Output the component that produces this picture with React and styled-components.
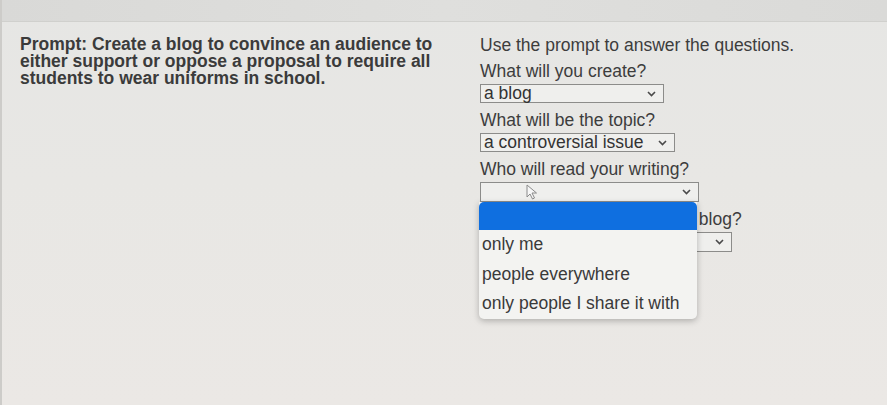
import React from 'react';
import styled, { createGlobalStyle } from 'styled-components';

const GlobalStyle = createGlobalStyle`
    html, body {
        margin: 0;
        padding: 0;
    }
    body {
        font-family: "Liberation Sans", Arial, sans-serif;
        background: #e7e6e3;
    }
`

const Page = styled.div`
    width: 887px;
    height: 405px;
    overflow: hidden;
    background: linear-gradient(180deg, #e6e6e4 0%, #e8e7e4 45%, #ebe8e5 100%);
    border-left: 2px solid #cdccc9;
    box-sizing: border-box;
`

const TopBar = styled.div`
    height: 21px;
    background: linear-gradient(90deg, #d9d9d7 0%, #dfdfdd 50%, #dadad8 100%);
    border-bottom: 1px solid #d0d0cd;
`

const Content = styled.div`
    display: grid;
    grid-template-columns: 460px 1fr;
    padding: 14px 0 0 18px;
`

const PromptText = styled.p`
    margin: 0;
    font-size: 17.5px;
    line-height: 17px;
    font-weight: 700;
    color: #3b3b3b;
    width: 445px;
`

const Questions = styled.div`
    display: flex;
    flex-direction: column;
    align-items: flex-start;
    color: #3d3d3d;
    font-size: 17.5px;
`

const Instruction = styled.div`
    line-height: 18px;
`

const Label = styled.div`
    line-height: 18px;
    margin-top: 8px;
    white-space: nowrap;
`

const SelectWrap = styled.div`
    position: relative;
    margin-top: 4px;
    z-index: ${p => (p.$open ? 2 : 1)};
`

const SelectBox = styled.div`
    display: flex;
    align-items: center;
    justify-content: space-between;
    box-sizing: border-box;
    width: ${p => p.$width}px;
    height: ${p => p.$height || 19}px;
    padding: 0 7px 0 3px;
    background: #efefed;
    border: 1px solid #8c8c8a;
    line-height: 17px;
    color: #333;
`

const Listbox = styled.div`
    position: absolute;
    top: 100%;
    left: -1px;
    width: 218px;
    background: #f3f3f1;
    border-radius: 0 0 5px 5px;
    box-shadow: 0 2px 6px rgba(0, 0, 0, 0.25);
    overflow: hidden;
`

const Highlight = styled.div`
    height: 28px;
    background: #0f6fe0;
    border-radius: 5px 5px 0 0;
`

const Option = styled.div`
    height: 29.5px;
    line-height: 29px;
    padding-left: 3px;
    color: #3a3a3a;
    white-space: nowrap;
`

const Cursor = styled.svg`
    position: absolute;
    left: 46px;
    top: 2px;
`

function Chevron() {
    return (
        <svg width="9" height="6" viewBox="0 0 9 6">
            <path d="M1 1 L4.5 4.5 L8 1" fill="none" stroke="#4a4a4a" strokeWidth="1.6" />
        </svg>
    );
}

function Select({ width, height, value, children, open }) {
    return (
        <SelectWrap $open={open}>
            <SelectBox $width={width} $height={height}>
                <span>{value}</span>
                <Chevron />
            </SelectBox>
            {children}
        </SelectWrap>
    );
}

function App() {
    return (
        <Page>
            <GlobalStyle />
            <TopBar />
            <Content>
                <PromptText>
                    Prompt: Create a blog to convince an audience to either support or oppose a proposal to require all students to wear uniforms in school.
                </PromptText>
                <Questions>
                    <Instruction>Use the prompt to answer the questions.</Instruction>
                    <Label>What will you create?</Label>
                    <Select width={184} value="a blog" />
                    <Label>What will be the topic?</Label>
                    <Select width={195} value="a controversial issue" />
                    <Label>Who will read your writing?</Label>
                    <Select width={219} height={20} value="" open>
                        <Cursor width="12" height="16" viewBox="0 0 12 16">
                            <path d="M1 1 L1 13 L4 10 L6.5 15 L8.5 14 L6 9 L10.5 9 Z" fill="#f7f7f7" stroke="#8a8a8a" strokeWidth="1" />
                        </Cursor>
                        <Listbox>
                            <Highlight />
                            <Option>only me</Option>
                            <Option>people everywhere</Option>
                            <Option>only people I share it with</Option>
                        </Listbox>
                    </Select>
                    <Label>What is the purpose of your blog?</Label>
                    <Select width={252} height={20} value="" />
                </Questions>
            </Content>
        </Page>
    );
}

export default App;
